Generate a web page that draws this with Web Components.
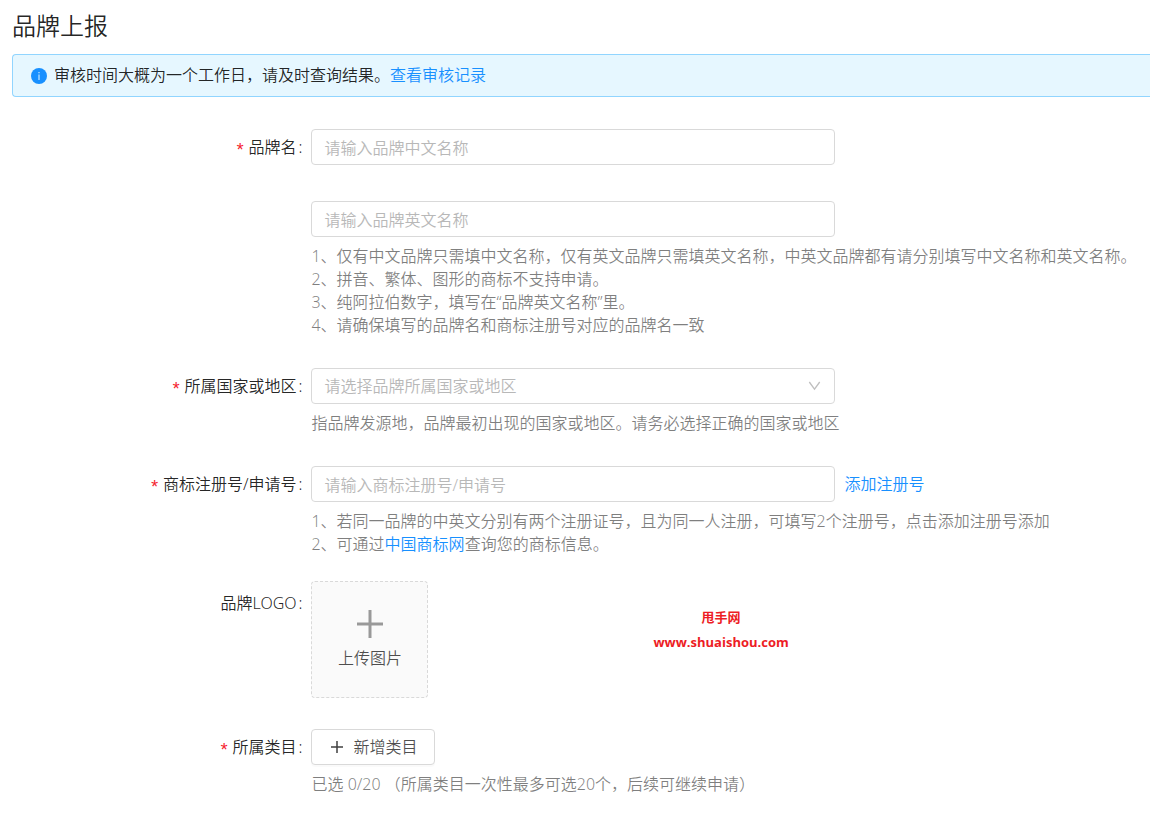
<!DOCTYPE html>
<html lang="zh-CN">
<head>
<meta charset="utf-8">
<meta name="viewport" content="width=device-width, initial-scale=1">
<title>品牌上报</title>
<style>
  body {
    margin: 0;
    background: #fff;
    color: rgba(0, 0, 0, .87);
    font: 350 16px/23px "Noto Sans", "Noto Sans CJK SC", sans-serif;
  }
</style>
</head>
<body>
<brand-report-page></brand-report-page>

<script>
function define(name, html) {
  const template = document.createElement('template');
  template.innerHTML = html;
  customElements.define(name, class extends HTMLElement {
    constructor() {
      super();
      this.attachShadow({ mode: 'open' }).append(template.content.cloneNode(true));
    }
  });
}

// Information banner
define('info-alert', `
  <style>
    :host {
      display: flex;
      align-items: center;
      gap: 7px;
      padding: 9px 18px;
      border: 1px solid #91d5ff;
      border-right: 0;
      border-radius: 4px 0 0 4px;
      background: #e6f7ff;
    }
    svg { flex: none; }
  </style>
  <svg width="16" height="16" viewBox="0 0 16 16" aria-hidden="true">
    <circle cx="8" cy="8" r="8" fill="#1890ff"/>
    <path d="M7.5 4h1v1.2h-1zM7.5 6.5h1V12h-1z" fill="#e6f7ff"/>
  </svg>
  <div><slot></slot></div>
`);

// One row of the form: label column, control, hint below it
define('form-row', `
  <style>
    :host {
      display: grid;
      grid-template-columns: minmax(0, 5fr) minmax(0, 14fr);
    }
    .label {
      display: flex;
      justify-content: flex-end;
      padding-right: 9px;
      line-height: var(--label-height, 36px);
      white-space: nowrap;
    }
    .star {
      display: none;
      height: 36px;
      margin-right: 3px;
      color: #f5222d;
      font: 400 18px/44px "Liberation Mono", monospace;
    }
    :host([required]) .star { display: block; }
    .colon { margin-left: 2px; }
    .control { display: flex; align-items: center; gap: 9px; }
    :host([unlabelled]) .label { visibility: hidden; }
  </style>
  <div class="label"><span class="star" aria-hidden="true">*</span><slot name="label"></slot><span class="colon">:</span></div>
  <div>
    <div class="control"><slot></slot></div>
    <slot name="hint"></slot>
  </div>
`);

// Arrow drawn over the right end of a drop-down
define('select-box', `
  <style>
    :host { display: block; position: relative; width: 100%; max-width: 524px; }
    svg { position: absolute; right: 14px; top: 12px; pointer-events: none; }
  </style>
  <slot></slot>
  <svg width="13" height="12" viewBox="0 0 13 12" fill="none" stroke="#bfbfbf" stroke-width="1.3" aria-hidden="true">
    <path d="M1.3 2 6.5 9.2 11.7 2"/>
  </svg>
`);

define('site-mark', `
  <style>
    :host {
      display: block;
      color: #ed1c24;
      font: 700 13px/25px "Open Sans", "Noto Sans CJK SC", sans-serif;
      text-align: center;
    }
    ::slotted(*) { display: block; }
  </style>
  <slot></slot>
`);

define('brand-report-page', `
  <style>
    :host { display: block; padding: 10px 0 24px 12px; }
    * { box-sizing: border-box; }
    h1 { margin: 0 0 12px; font-size: 24px; line-height: 32px; font-weight: 350; }
    a { color: #1890ff; text-decoration: none; }
    form { margin-top: 32px; display: flex; flex-direction: column; gap: 31px; }
    .names { display: flex; flex-direction: column; gap: 36px; }
    input, select {
      width: 100%;
      max-width: 524px;
      height: 36px;
      margin: 0;
      padding: 2px 12px 0;
      border: 1px solid #d9d9d9;
      border-radius: 4px;
      background: #fff;
      color: inherit;
      font: inherit;
      outline: none;
    }
    select { display: block; max-width: none; padding: 0 12px; appearance: none; color: #b8b8b8; }
    input::placeholder { color: #b8b8b8; opacity: 1; }
    input:focus, select:focus { border-color: #40a9ff; }
    .hint { list-style: none; padding: 0; margin: 8px 0 0; color: rgba(0, 0, 0, .5); }
    button { font: inherit; cursor: pointer; }
    .logo { --label-height: 44px; margin-top: -6px; }
    .upload {
      flex: none;
      display: flex;
      flex-direction: column;
      align-items: center;
      justify-content: center;
      gap: 9px;
      width: 117px;
      height: 117px;
      padding: 0;
      border: 1px dashed #d9d9d9;
      border-radius: 4px;
      background: #fafafa;
      color: rgba(0, 0, 0, .7);
    }
    .add {
      display: flex;
      align-items: center;
      gap: 9px;
      height: 36px;
      padding: 0 17px 0 18px;
      border: 1px solid #d9d9d9;
      border-radius: 4px;
      background: #fff;
      color: rgba(0, 0, 0, .7);
      box-shadow: 0 2px 0 rgba(0, 0, 0, .02);
    }
    site-mark { align-self: flex-start; margin: 24px 0 0 216px; }
  </style>
  <h1>品牌上报</h1>
  <info-alert>审核时间大概为一个工作日，请及时查询结果。<a href="#records">查看审核记录</a></info-alert>
  <form>
    <div class="names">
      <form-row required>
        <label slot="label" for="name-cn">品牌名</label>
        <input id="name-cn" placeholder="请输入品牌中文名称">
      </form-row>
      <form-row unlabelled>
        <input id="name-en" aria-label="品牌英文名称" placeholder="请输入品牌英文名称">
        <ul class="hint" slot="hint">
          <li>1、仅有中文品牌只需填中文名称，仅有英文品牌只需填英文名称，中英文品牌都有请分别填写中文名称和英文名称。</li>
          <li>2、拼音、繁体、图形的商标不支持申请。</li>
          <li>3、纯阿拉伯数字，填写在“品牌英文名称”里。</li>
          <li>4、请确保填写的品牌名和商标注册号对应的品牌名一致</li>
        </ul>
      </form-row>
    </div>
    <form-row required>
      <label slot="label" for="region">所属国家或地区</label>
      <select-box><select id="region"><option>请选择品牌所属国家或地区</option></select></select-box>
      <p class="hint" slot="hint">指品牌发源地，品牌最初出现的国家或地区。请务必选择正确的国家或地区</p>
    </form-row>
    <form-row required>
      <label slot="label" for="reg-no">商标注册号/申请号</label>
      <input id="reg-no" placeholder="请输入商标注册号/申请号">
      <a href="#add-number">添加注册号</a>
      <ul class="hint" slot="hint">
        <li>1、若同一品牌的中英文分别有两个注册证号，且为同一人注册，可填写2个注册号，点击添加注册号添加</li>
        <li>2、可通过<a href="#trademark">中国商标网</a>查询您的商标信息。</li>
      </ul>
    </form-row>
    <form-row class="logo">
      <label slot="label" for="logo">品牌LOGO</label>
      <button class="upload" id="logo" type="button">
        <svg width="28" height="28" viewBox="0 0 28 28" stroke="#999" stroke-width="3" aria-hidden="true"><path d="M14 0v28M1 14h26"/></svg>
        <span>上传图片</span>
      </button>
      <site-mark><span>甩手网</span><span>www.shuaishou.com</span></site-mark>
    </form-row>
    <form-row required>
      <label slot="label" for="category">所属类目</label>
      <button class="add" id="category" type="button">
        <svg width="14" height="14" viewBox="0 0 14 14" stroke="#404040" stroke-width="1.5" aria-hidden="true"><path d="M7 1v12M1 7h12"/></svg>
        <span>新增类目</span>
      </button>
      <p class="hint" slot="hint">已选 0/20 （所属类目一次性最多可选20个，后续可继续申请）</p>
    </form-row>
  </form>
`);
</script>
</body>
</html>
